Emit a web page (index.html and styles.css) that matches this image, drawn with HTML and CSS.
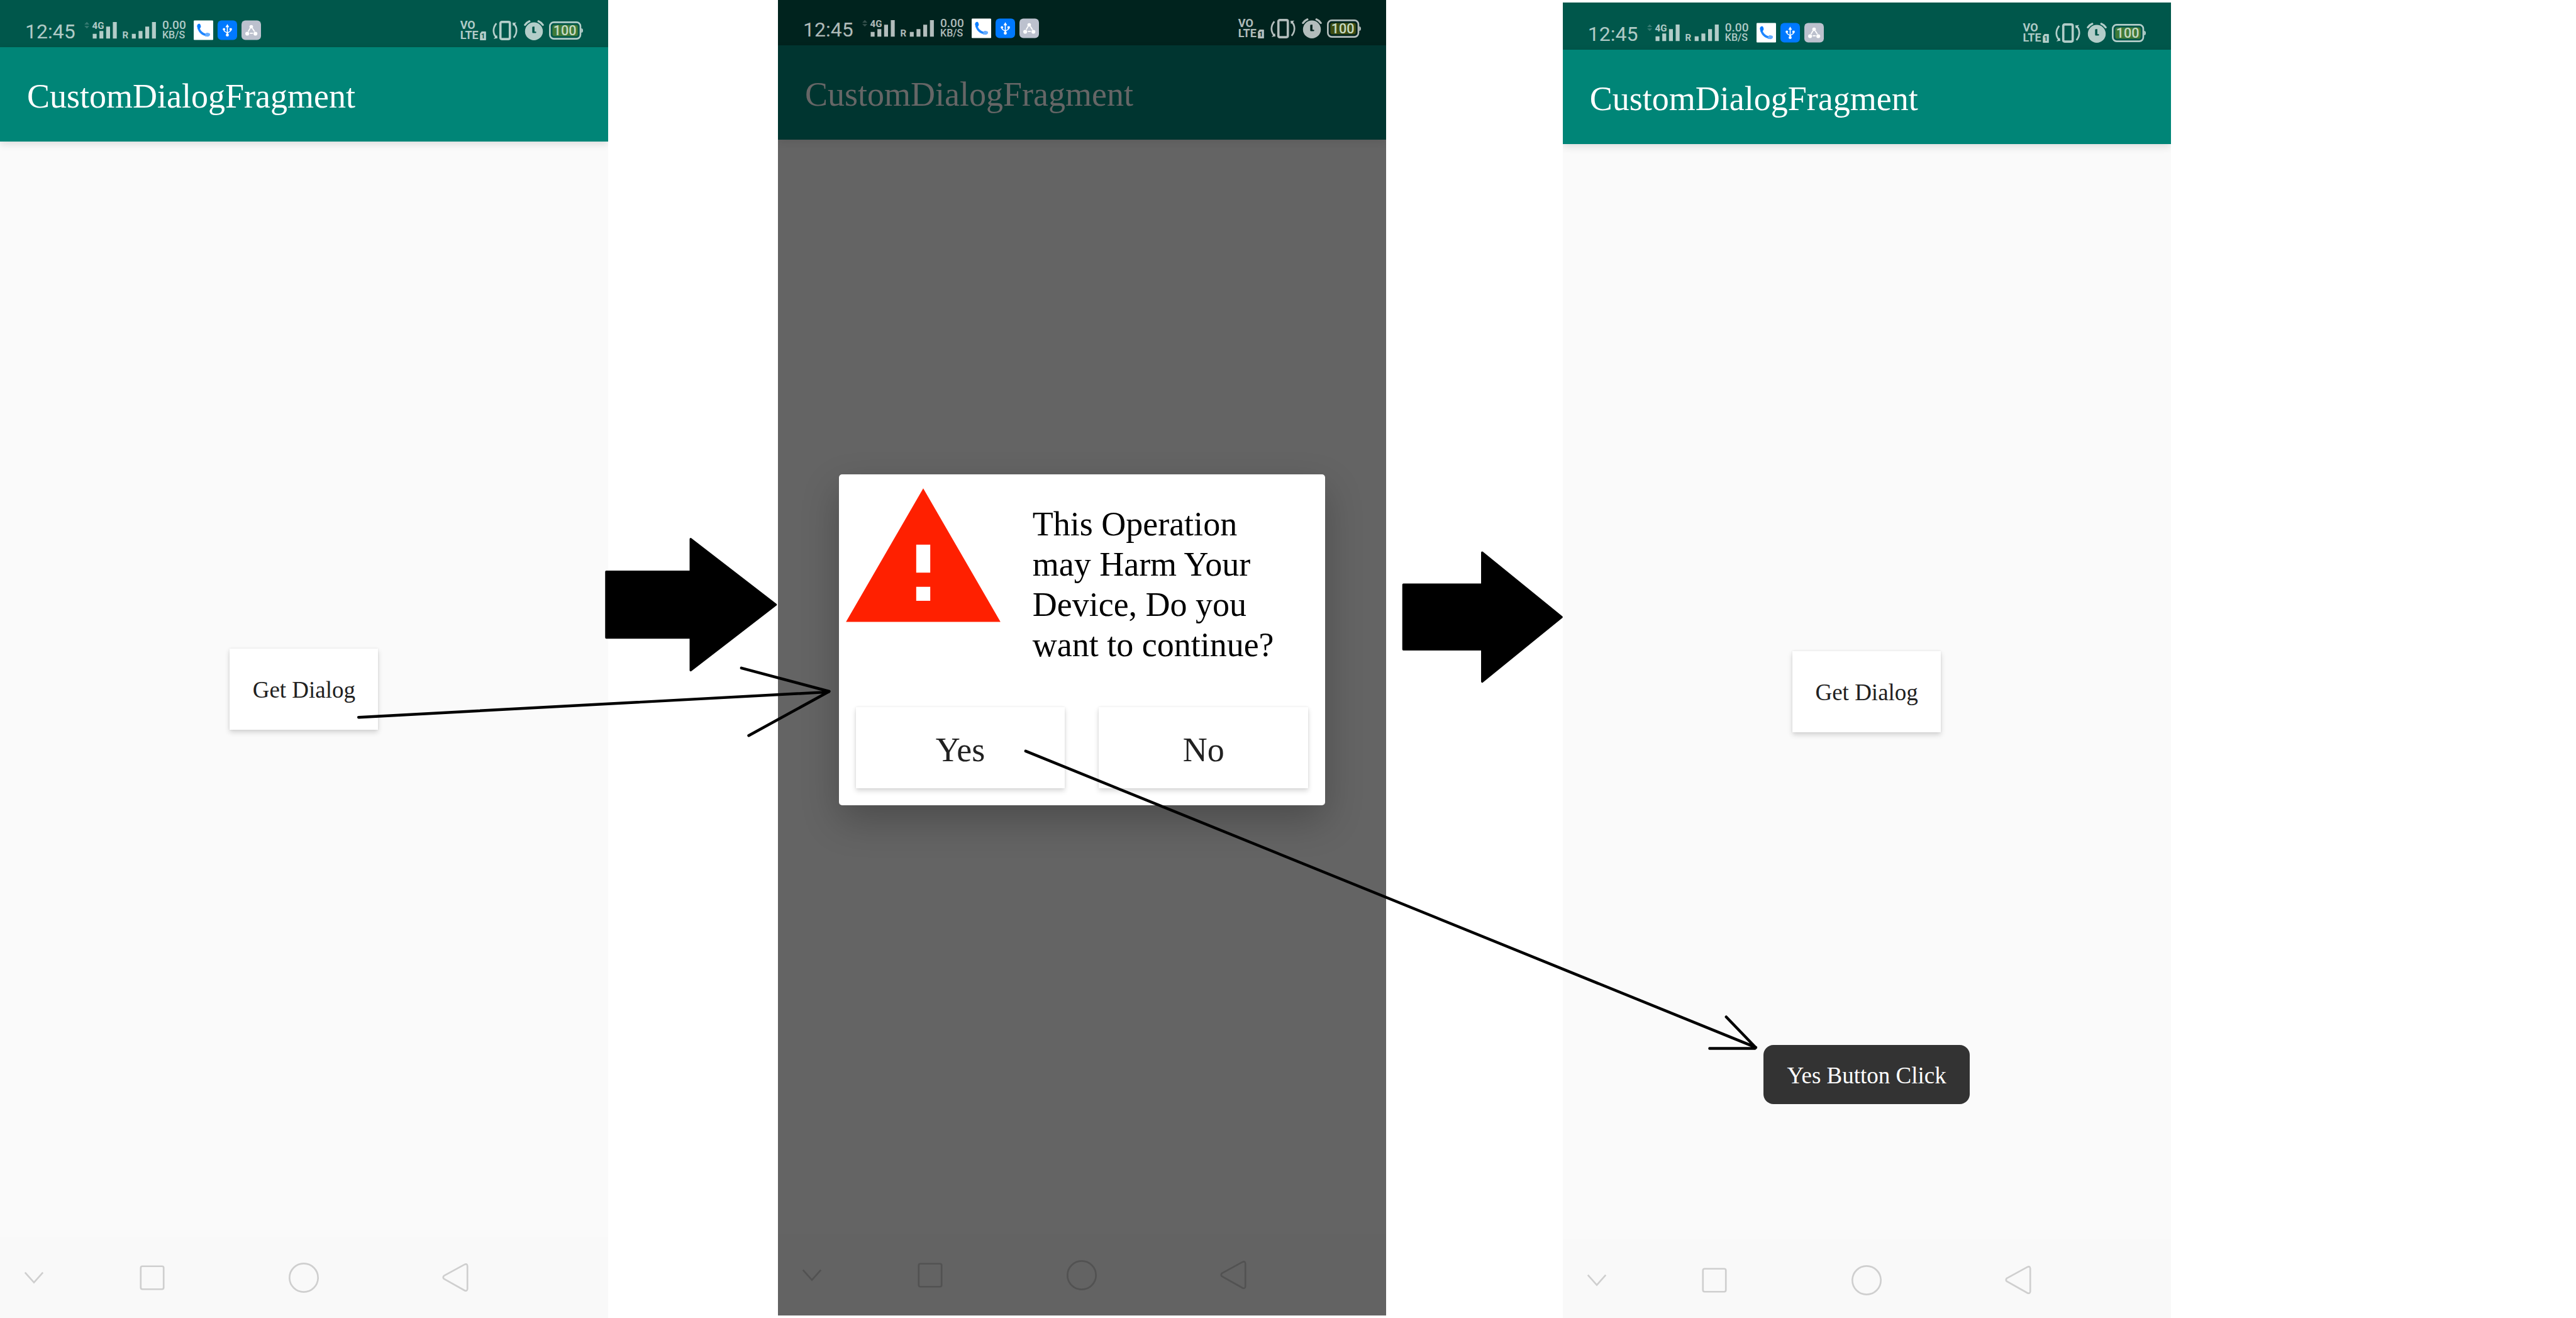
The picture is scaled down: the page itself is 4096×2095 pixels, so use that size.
FILE: index.html
```html
<!DOCTYPE html>
<html lang="en">
<head>
<meta charset="utf-8">
<meta name="viewport" content="width=device-width, initial-scale=1">
<title>CustomDialogFragment</title>
<link rel="stylesheet" href="styles.css">
</head>
<body>
<svg class="sprite" aria-hidden="true">
  <symbol id="i-call" viewBox="0 0 35 35">
    <rect width="35" height="35" rx="1.500" fill="#fff"/>
    <path d="M9 12C9 19 16 26 24 26" fill="none" stroke="#1f86ff" stroke-width="4"/>
    <path d="M6 10.500C6 6 10.500 4.500 12 7.500C13.500 11 13 13 10.500 14.500L7.500 16Z" fill="#0a7cff"/>
    <path d="M20 28.500L21.500 23.500C23 21.500 25 22 28 23C31 24.500 29 29 25 29Z" fill="#66adff"/>
  </symbol>
  <symbol id="i-usb" viewBox="0 0 35 35">
    <rect width="35" height="35" rx="7" fill="#0079ff"/>
    <g fill="none" stroke="#fff" stroke-width="1.800"><path d="M17.500 10V26M11.500 16V17.500C11.500 21.500 17.500 20 17.500 24C17.500 20 23.500 21.500 23.500 17.500V16"/></g>
    <path d="M17.500 6.500L20.800 12H14.200Z" fill="#fff"/>
    <circle cx="11.500" cy="15.800" r="2.200" fill="#fff"/><rect x="21.400" y="13.800" width="4.200" height="4.200" rx="1" fill="#fff"/><circle cx="17.500" cy="26.200" r="2.700" fill="#fff"/>
  </symbol>
  <symbol id="i-share" viewBox="0 0 35 35">
    <rect width="35" height="35" rx="7" fill="#bcc1ce"/>
    <path d="M15.500 14L12 20M19.500 14L23.500 20M15 23H20.500" fill="none" stroke="#fff" stroke-width="2"/>
    <circle cx="17.500" cy="11.300" r="3.200" fill="#fff"/><circle cx="10.300" cy="23.700" r="3.500" fill="#fff"/><circle cx="25" cy="23.700" r="3.500" fill="#fff"/>
  </symbol>
  <symbol id="i-vibrate" viewBox="0 0 44 34">
    <rect x="14" y="2" width="16.500" height="30" rx="2.500" fill="none" stroke="currentColor" stroke-width="4"/>
    <path d="M7 4.500C0.500 12 0.500 22 6 28M37 29.500C43.500 22 43.500 12 38 6" fill="none" stroke="currentColor" stroke-width="3"/>
    <path d="M2 31.500L9 30.500L8 25ZM42 3L35 3.500L36 9Z" fill="currentColor"/>
  </symbol>
  <symbol id="i-alarm" viewBox="0 0 36 36">
    <path fill-rule="evenodd" d="M18 4A16 16 0 1 0 18 36A16 16 0 1 0 18 4ZM17 11.500H19V20.500H21C22.500 20.500 22.500 23 21 23H17C15.500 23 15 22.500 15 21V12.500Q15 11.500 17 11.500Z" fill="currentColor"/>
    <path d="M2 8.500Q5 4 10 2M26 2Q31 4 34 8.500" fill="none" stroke="currentColor" stroke-width="3.500" stroke-linecap="round"/>
  </symbol>
  <symbol id="i-down" viewBox="0 0 54 54"><path d="M11 17.500L27 35.500L43 17.500" fill="none" stroke="currentColor" stroke-width="3"/></symbol>
  <symbol id="i-square" viewBox="0 0 54 54"><rect x="6.500" y="6.500" width="41" height="41" rx="3" fill="none" stroke="currentColor" stroke-width="3"/></symbol>
  <symbol id="i-circle" viewBox="0 0 54 54"><circle cx="27" cy="27" r="25.500" fill="none" stroke="currentColor" stroke-width="3"/></symbol>
  <symbol id="i-back" viewBox="0 0 54 54"><path d="M5.500 23.500L42 3.500Q47 1 47.500 6V47Q47 52 42 49.500L5.500 29Q3 26.500 5.500 23.500Z" fill="none" stroke="currentColor" stroke-width="3"/></symbol>
</svg>

<main class="board">
  <section class="phone phone-start">
    <div class="status">
      <span class="time">12:45</span>
      <svg class="signal" viewBox="147 36 132 36" fill="currentColor"><path opacity=".3" d="M149 44L153.500 39L158 44ZM149 46.500H158L153.500 51Z"/><text x="163" y="51.500" class="tag">4G</text><path d="M164 60.500h7V69h-7ZM176 55.500h7V69h-7ZM188 47.500h7V69h-7ZM200 39.500h7V69h-7ZM234 60.500h7V69h-7ZM246 55.500h7V69h-7ZM258 47.500h7V69h-7ZM270 39.500h7V69h-7Z"/><text x="217" y="69" class="tag">R</text></svg>
      <span class="rate"><span>0.00</span><small>KB/S</small></span>
      <span class="badges"><svg><use href="#i-call"/></svg><svg><use href="#i-usb"/></svg><svg><use href="#i-share"/></svg></span>
      <span class="system">
        <span class="volte"><span>VO</span><span>LTE</span></span>
        <svg class="sim" viewBox="0 0 11 16"><path d="M3 0H10Q11 0 11 1V15Q11 16 10 16H1Q0 16 0 15V4Z" fill="currentColor"/><text class="sim-no" x="2" y="13">1</text></svg>
        <svg class="vibrate"><use href="#i-vibrate"/></svg>
        <svg class="alarm"><use href="#i-alarm"/></svg>
        <svg class="battery" viewBox="0 0 60 32"><rect x="1.500" y="1.500" width="54" height="29" rx="7" fill="none" stroke="currentColor" stroke-width="3"/><path d="M57 12Q60 12 60 16T57 20Z" fill="currentColor"/><rect class="charge" x="6" y="6" width="45" height="20" rx="4"/><text class="level" x="28" y="24">100</text></svg>
      </span>
    </div>
    <header class="appbar"><h1>CustomDialogFragment</h1></header>
    <div class="content"><button class="btn btn-open">Get Dialog</button></div>
    <nav class="nav">
      <button aria-label="Hide"><svg><use href="#i-down"/></svg></button><button aria-label="Recent"><svg><use href="#i-square"/></svg></button><button aria-label="Home"><svg><use href="#i-circle"/></svg></button><button aria-label="Back"><svg><use href="#i-back"/></svg></button>
    </nav>
  </section>

  <section class="phone phone-dialog">
    <div class="status">
      <span class="time">12:45</span>
      <svg class="signal" viewBox="147 36 132 36" fill="currentColor"><path opacity=".3" d="M149 44L153.500 39L158 44ZM149 46.500H158L153.500 51Z"/><text x="163" y="51.500" class="tag">4G</text><path d="M164 60.500h7V69h-7ZM176 55.500h7V69h-7ZM188 47.500h7V69h-7ZM200 39.500h7V69h-7ZM234 60.500h7V69h-7ZM246 55.500h7V69h-7ZM258 47.500h7V69h-7ZM270 39.500h7V69h-7Z"/><text x="217" y="69" class="tag">R</text></svg>
      <span class="rate"><span>0.00</span><small>KB/S</small></span>
      <span class="badges"><svg><use href="#i-call"/></svg><svg><use href="#i-usb"/></svg><svg><use href="#i-share"/></svg></span>
      <span class="system">
        <span class="volte"><span>VO</span><span>LTE</span></span>
        <svg class="sim" viewBox="0 0 11 16"><path d="M3 0H10Q11 0 11 1V15Q11 16 10 16H1Q0 16 0 15V4Z" fill="currentColor"/><text class="sim-no" x="2" y="13">1</text></svg>
        <svg class="vibrate"><use href="#i-vibrate"/></svg>
        <svg class="alarm"><use href="#i-alarm"/></svg>
        <svg class="battery" viewBox="0 0 60 32"><rect x="1.500" y="1.500" width="54" height="29" rx="7" fill="none" stroke="currentColor" stroke-width="3"/><path d="M57 12Q60 12 60 16T57 20Z" fill="currentColor"/><rect class="charge" x="6" y="6" width="45" height="20" rx="4"/><text class="level" x="28" y="24">100</text></svg>
      </span>
    </div>
    <header class="appbar"><h1>CustomDialogFragment</h1></header>
    <div class="content"></div>
    <nav class="nav">
      <button aria-label="Hide"><svg><use href="#i-down"/></svg></button><button aria-label="Recent"><svg><use href="#i-square"/></svg></button><button aria-label="Home"><svg><use href="#i-circle"/></svg></button><button aria-label="Back"><svg><use href="#i-back"/></svg></button>
    </nav>
    <div class="dialog-layer">
      <div class="dialog" role="dialog" aria-labelledby="warning">
        <div class="dialog-body">
          <svg class="warning-icon" viewBox="0 0 24 24"><path d="M1 21h22L12 2 1 21zm12-3h-2v-2h2v2zm0-4h-2v-4h2v4z" fill="#ff2000"/></svg>
          <p id="warning">This Operation may Harm Your Device, Do you want to continue?</p>
        </div>
        <div class="dialog-actions"><button class="btn">Yes</button><button class="btn">No</button></div>
      </div>
    </div>
  </section>

  <section class="phone phone-result">
    <div class="status">
      <span class="time">12:45</span>
      <svg class="signal" viewBox="147 36 132 36" fill="currentColor"><path opacity=".3" d="M149 44L153.500 39L158 44ZM149 46.500H158L153.500 51Z"/><text x="163" y="51.500" class="tag">4G</text><path d="M164 60.500h7V69h-7ZM176 55.500h7V69h-7ZM188 47.500h7V69h-7ZM200 39.500h7V69h-7ZM234 60.500h7V69h-7ZM246 55.500h7V69h-7ZM258 47.500h7V69h-7ZM270 39.500h7V69h-7Z"/><text x="217" y="69" class="tag">R</text></svg>
      <span class="rate"><span>0.00</span><small>KB/S</small></span>
      <span class="badges"><svg><use href="#i-call"/></svg><svg><use href="#i-usb"/></svg><svg><use href="#i-share"/></svg></span>
      <span class="system">
        <span class="volte"><span>VO</span><span>LTE</span></span>
        <svg class="sim" viewBox="0 0 11 16"><path d="M3 0H10Q11 0 11 1V15Q11 16 10 16H1Q0 16 0 15V4Z" fill="currentColor"/><text class="sim-no" x="2" y="13">1</text></svg>
        <svg class="vibrate"><use href="#i-vibrate"/></svg>
        <svg class="alarm"><use href="#i-alarm"/></svg>
        <svg class="battery" viewBox="0 0 60 32"><rect x="1.500" y="1.500" width="54" height="29" rx="7" fill="none" stroke="currentColor" stroke-width="3"/><path d="M57 12Q60 12 60 16T57 20Z" fill="currentColor"/><rect class="charge" x="6" y="6" width="45" height="20" rx="4"/><text class="level" x="28" y="24">100</text></svg>
      </span>
    </div>
    <header class="appbar"><h1>CustomDialogFragment</h1></header>
    <div class="content">
      <button class="btn btn-open">Get Dialog</button>
      <div class="toast" role="status">Yes Button Click</div>
    </div>
    <nav class="nav">
      <button aria-label="Hide"><svg><use href="#i-down"/></svg></button><button aria-label="Recent"><svg><use href="#i-square"/></svg></button><button aria-label="Home"><svg><use href="#i-circle"/></svg></button><button aria-label="Back"><svg><use href="#i-back"/></svg></button>
    </nav>
  </section>

  <svg class="arrows" viewBox="0 0 4576 2340" preserveAspectRatio="none" aria-hidden="true">
    <g stroke="#000" stroke-width="4" stroke-linejoin="round" fill="#000">
      <path d="M1077 1015H1227V957L1378 1073.500L1227 1190V1132H1077Z"/>
      <path d="M2493 1038H2633V981L2774 1095.500L2633 1210V1153H2493Z"/>
    </g>
    <g stroke="#000" stroke-width="5" stroke-linecap="round" stroke-linejoin="round" fill="none">
      <path d="M637 1273.500L1472 1228.500M1317 1186L1473 1227.500L1330 1306"/>
      <path d="M1822 1333.500L3119 1859.500M3066.500 1805.500L3119 1860L3117 1861.500H3037"/>
    </g>
  </svg>
</main>
</body>
</html>
```
FILE: styles.css
```css
* { box-sizing: border-box; }

body {
  margin: 0;
  background: #fff;
  font-family: "Liberation Serif", "Times New Roman", serif;
}

button {
  border: 0;
  padding: 0;
  background: none;
  font: inherit;
  color: inherit;
}

svg { display: block; }

.sprite {
  position: absolute;
  width: 0;
  height: 0;
}

/* Three screens with gutters for the block arrows */
.board {
  position: relative;
  display: grid;
  grid-template-columns:
    minmax(0, 1080fr) minmax(0, 302fr) minmax(0, 1080fr)
    minmax(0, 314fr) minmax(0, 1080fr) minmax(0, 720fr);
  min-height: 100vh;
  overflow: hidden;
}

.arrows {
  position: absolute;
  inset: 0;
  width: 100%;
  height: 100%;
  pointer-events: none;
}

.phone {
  --status-bg: #00574b;
  --bar-bg: #008577;
  --bar-text: #fff;
  --page-bg: #fafafa;
  --nav-bg: #f9f9f9;
  --nav-icon: #cfcfcf;
  --charge: #3f7a37;
  --status-height: 75px;
  position: relative;
  display: flex;
  flex-direction: column;
  overflow: hidden;
  background: var(--page-bg);
}

.phone-start { grid-column: 1; }

.phone-dialog {
  --status-bg: #00231e;
  --bar-bg: #003530;
  --bar-text: #666;
  --page-bg: #646464;
  --nav-bg: #636363;
  --nav-icon: #525252;
  --charge: #3e4d11;
  --status-height: 72px;
  grid-column: 3;
  margin-bottom: 4px;
}

.phone-result {
  grid-column: 5;
  margin: 4px 0 -4px;
}

/* Status bar */
.status {
  display: flex;
  align-items: flex-end;
  height: var(--status-height);
  padding: 0 40px 11px;
  background: var(--status-bg);
  color: rgba(255, 255, 255, 0.7);
  font-family: Roboto, sans-serif;
  font-weight: 500;
}

.time {
  width: 92px;
  font-size: 32px;
  font-weight: 400;
  line-height: 28px;
}

.signal {
  width: 118px;
  height: 32px;
}

.tag {
  font-size: 17px;
  font-weight: 700;
}

.rate {
  display: flex;
  flex-direction: column;
  width: 58px;
  padding-left: 8px;
  font-size: 19px;
  line-height: 16px;
}

.rate small { font-size: 16px; }

.badges {
  display: flex;
  gap: 7px;
}

.badges svg {
  width: 31px;
  height: 32px;
}

.system {
  display: flex;
  align-items: flex-end;
  margin-left: auto;
}

.volte {
  display: flex;
  flex-direction: column;
  width: 31px;
  font-size: 18px;
  font-weight: 700;
  line-height: 16px;
}

.sim {
  width: 10px;
  height: 14px;
}

.sim-no {
  fill: var(--status-bg);
  font-size: 12px;
  font-weight: 700;
}

.vibrate {
  width: 40px;
  height: 31px;
  margin-left: 10px;
}

.alarm {
  width: 32px;
  height: 32px;
  margin-left: 10px;
}

.battery {
  width: 54px;
  height: 29px;
  margin: 0 0 1px 8px;
}

.charge { fill: var(--charge); }

.level {
  fill: #c6d9c3;
  font-size: 24px;
  font-weight: 500;
  text-anchor: middle;
}

/* App bar */
.appbar {
  position: relative;
  display: flex;
  align-items: center;
  height: 150px;
  padding: 6px 43px 0;
  background: var(--bar-bg);
  box-shadow: 0 4px 12px rgba(0, 0, 0, 0.12);
}

.phone-dialog .appbar { box-shadow: 0 4px 12px rgba(0, 0, 0, 0.08); }

.appbar h1 {
  margin: 0;
  color: var(--bar-text);
  font-size: 54px;
  font-weight: 400;
}

.content {
  position: relative;
  display: flex;
  flex: 1;
  align-items: center;
  justify-content: center;
}

.btn {
  height: 129px;
  padding-top: 6px;
  background: #fff;
  color: #212121;
  font-size: 54px;
  box-shadow: 0 4px 8px rgba(0, 0, 0, 0.16), 0 0 3px rgba(0, 0, 0, 0.08);
}

.btn-open {
  width: 236px;
  padding-top: 2px;
  font-size: 37px;
}

.toast {
  position: absolute;
  bottom: 215px;
  left: 50%;
  width: 328px;
  padding-top: 4px;
  border-radius: 16px;
  background: #333;
  color: #fff;
  font-size: 37px;
  line-height: 90px;
  text-align: center;
  transform: translateX(-50%);
}

/* Navigation keys */
.nav {
  display: grid;
  grid-template-columns: 120fr 300fr 240fr 300fr 120fr;
  align-items: center;
  justify-items: center;
  height: 129px;
  background: var(--nav-bg);
  color: var(--nav-icon);
}

.nav svg {
  width: 48px;
  height: 48px;
}

/* Dialog */
.dialog-layer {
  position: absolute;
  inset: 72px 0 129px;
  display: flex;
  align-items: center;
  justify-content: center;
}

.dialog {
  width: 80%;
  border-radius: 5px;
  background: #fff;
  box-shadow: 0 24px 60px rgba(0, 0, 0, 0.24);
}

.dialog-body {
  display: flex;
  gap: 40px;
  min-height: 370px;
}

.warning-icon {
  flex: none;
  width: 268px;
  height: 268px;
}

.dialog-body p {
  max-width: 400px;
  margin: 0;
  padding-top: 47px;
  color: #000;
  font-size: 54px;
  line-height: 64px;
}

.dialog-actions {
  display: grid;
  grid-template-columns: 1fr 1fr;
  gap: 54px;
  padding: 0 27px 27px;
}
```
